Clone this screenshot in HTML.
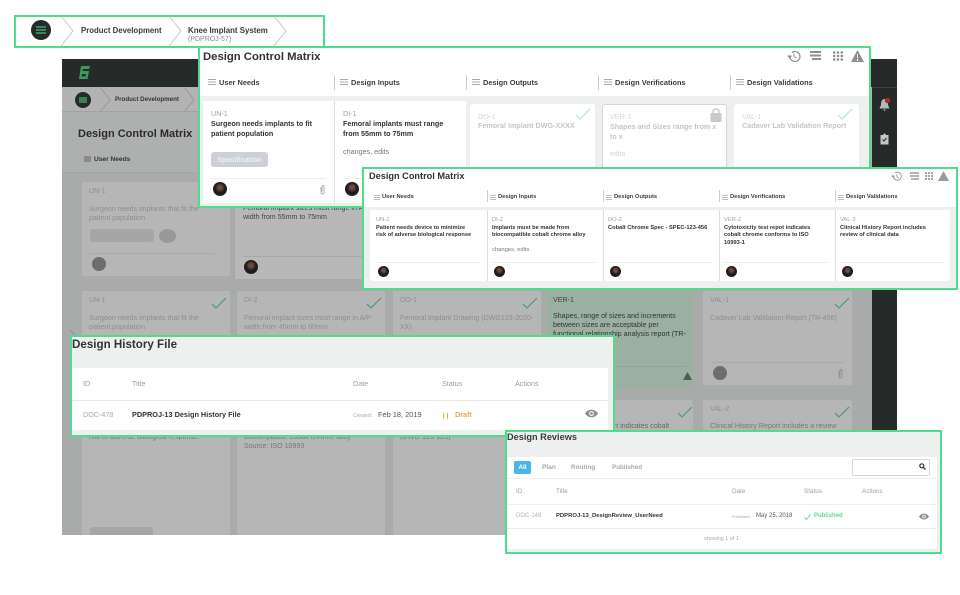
<!DOCTYPE html>
<html><head><meta charset="utf-8">
<style>
*{box-sizing:border-box;margin:0;padding:0}
html,body{width:960px;height:595px;overflow:hidden;background:#fff}
body{position:relative;font-family:"Liberation Sans",sans-serif;color:#333;filter:blur(.3px)}
.a,.t,.c,.p,.av,.s{position:absolute}
.t{white-space:nowrap;line-height:1.2}
.b{font-weight:bold}
.p{border:2px solid #4edc8d;overflow:hidden}
.c{background:#b5b6b5;border-radius:2px}
.bt{color:#8d8e8d;font-size:7.1px;line-height:9.100px;position:absolute;left:7px;white-space:normal}
.av{border-radius:50%;background:radial-gradient(circle at 50% 40%,#6b4a40 0 18%,#1c1a1a 45%,#2a2626 100%)}
.s{background:#ccc}
svg{position:absolute;overflow:visible}
</style></head><body>

<!-- Background app -->
<div class="a" style="left:62px;top:59px;width:835px;height:476px;background:#aeb0af;overflow:hidden">
  <div class="a" style="left:0;top:0;width:835px;height:28px;background:#262a29"></div>
  <svg style="left:16px;top:6px" width="13" height="15"><path d="M3 1H12L11 4H5L4.500 6H11L9.500 14H1L3 1ZM4 9L3.500 11.500H7.500L8 9Z" fill="#3f9a5e" fill-rule="evenodd"/></svg>
  <div class="a" style="left:0;top:28px;width:810px;height:25px;background:#b3b3b3;border-bottom:1px solid #a2a2a2"></div>
  <div class="a" style="left:13px;top:33px;width:16px;height:16px;border-radius:50%;background:#262a29"></div>
  <div class="a" style="left:17px;top:38px;width:8px;height:6px;background:#3d7f57"></div>
  <svg style="left:38px;top:28px" width="20" height="25"><path d="M0 0L10 13L0 25" fill="none" stroke="#999"/></svg>
  <div class="t b" style="left:53px;top:37px;font-size:6.200px;color:#333">Product Development</div>
  <svg style="left:122px;top:28px" width="14" height="25"><path d="M0 0L10 13L0 25" fill="none" stroke="#999"/></svg>
  <div class="t b" style="left:16px;top:69px;font-size:11px;color:#2b2b2b">Design Control Matrix</div>
  <div class="a" style="left:22px;top:97px;width:7px;height:6px;background:#8a8a8a"></div>
  <div class="t b" style="left:32px;top:97px;font-size:6.600px;color:#333">User Needs</div>
  <div class="a" style="left:0;top:113px;width:810px;height:1px;background:#a5a5a5"></div>
  <div class="a" style="left:0;top:114px;width:810px;height:362px;background:#a9abaa"></div>
  <svg style="left:8px;top:271px" width="6" height="6"><path d="M0 0L6 6" stroke="#8f8f8f"/></svg>

  <!-- row 1 -->
  <div class="c" style="left:20px;top:123px;width:148px;height:94px">
    <div class="bt" style="top:5px">UN-1</div>
    <div class="bt" style="top:23px;width:130px">Surgeon needs implants that fit the patient population</div>
    <div class="a" style="left:8px;top:47px;width:64px;height:13px;background:#a5a6a6;border-radius:3px"></div>
    <div class="a" style="left:77px;top:47px;width:17px;height:14px;background:#999;border-radius:50%"></div>
    <div class="a" style="left:8px;top:71px;width:124px;height:1px;background:#a8a9a8"></div>
    <div class="a" style="left:10px;top:75px;width:14px;height:14px;background:#6f6d6b;border-radius:50%"></div>
  </div>
  <div class="c" style="left:173px;top:123px;width:160px;height:97px;background:#b8b8b8">
    <div class="bt" style="top:22px;left:8px;color:#444;white-space:nowrap">Femoral implant sizes must range in A/P<br>width from 55mm to 75mm</div>
    <div class="a" style="left:8px;top:74px;width:150px;height:1px;background:#a8a9a8"></div>
    <div class="av" style="left:9px;top:78px;width:14px;height:14px"></div>
  </div>

  <!-- row 2 -->
  <div class="c" style="left:20px;top:232px;width:148px;height:94px">
    <div class="bt" style="top:5px">UN-1</div>
    <div class="bt" style="top:23px;width:130px">Surgeon needs implants that fit the patient population</div>
    <svg style="left:129px;top:6px" width="16" height="12"><path d="M1 7L5 11L15 1" fill="none" stroke="#5b9c76" stroke-width="1.300"/></svg>
  </div>
  <div class="c" style="left:175px;top:232px;width:148px;height:94px">
    <div class="bt" style="top:5px">DI-2</div>
    <div class="bt" style="top:23px;width:140px">Femoral implant sizes must range in A/P width from 45mm to 60mm</div>
    <svg style="left:129px;top:6px" width="16" height="12"><path d="M1 7L5 11L15 1" fill="none" stroke="#5b9c76" stroke-width="1.300"/></svg>
  </div>
  <div class="c" style="left:331px;top:232px;width:148px;height:94px">
    <div class="bt" style="top:5px">DO-1</div>
    <div class="bt" style="top:23px;width:140px;white-space:nowrap">Femoral Implant Drawing (DWG123-2020-<br>XX)</div>
    <svg style="left:129px;top:6px" width="16" height="12"><path d="M1 7L5 11L15 1" fill="none" stroke="#5b9c76" stroke-width="1.300"/></svg>
  </div>
  <div class="c" style="left:484px;top:232px;width:147px;height:97px;background:#9bb0a1">
    <div class="bt" style="top:5px;color:#444">VER-1</div>
    <div class="bt" style="top:21px;width:138px;color:#333;white-space:nowrap">Shapes, range of sizes and increments<br>between sizes are acceptable per<br>functional relationship analysis report (TR-<br>123)</div>
    <div class="a" style="left:7px;top:75px;width:133px;height:1px;background:#8fa596"></div>
    <svg style="left:137px;top:81px" width="9" height="8"><path d="M4.500 0L9 8H0Z" fill="#555a57"/></svg>
  </div>
  <div class="c" style="left:641px;top:232px;width:149px;height:94px">
    <div class="bt" style="top:5px">VAL-1</div>
    <div class="bt" style="top:23px;width:140px">Cadaver Lab Validation Report (TR-456)</div>
    <svg style="left:131px;top:6px" width="16" height="12"><path d="M1 7L5 11L15 1" fill="none" stroke="#5b9c76" stroke-width="1.300"/></svg>
    <div class="a" style="left:7px;top:71px;width:134px;height:1px;background:#a8a9a8"></div>
    <div class="a" style="left:10px;top:75px;width:14px;height:14px;background:#6f6d6b;border-radius:50%"></div>
    <svg style="left:135px;top:78px" width="5" height="9"><path d="M1 2V7.500A1.500 1.500 0 0 0 4 7.500V1.500A1 1 0 0 0 2 1.500V6.500" fill="none" stroke="#929292"/></svg>
  </div>

  <!-- row 3 -->
  <div class="c" style="left:20px;top:341px;width:148px;height:135px">
    <div class="bt" style="top:33px;width:140px;color:#777">risk of adverse biological response.</div>
    <div class="a" style="left:8px;top:127px;width:63px;height:12px;background:#a5a6a6;border-radius:3px"></div>
  </div>
  <div class="c" style="left:175px;top:341px;width:148px;height:135px">
    <div class="bt" style="top:33px;width:140px;color:#777">biocompatible cobalt chrome alloy<br>Source: ISO 10993</div>
  </div>
  <div class="c" style="left:331px;top:341px;width:148px;height:135px">
    <div class="bt" style="top:33px;width:140px;color:#777">(DWG-123-123)</div>
  </div>
  <div class="c" style="left:484px;top:341px;width:147px;height:135px">
    <svg style="left:131px;top:6px" width="16" height="12"><path d="M1 7L5 11L15 1" fill="none" stroke="#5b9c76" stroke-width="1.300"/></svg>
    <div class="bt" style="top:22px;width:140px;left:60px;white-space:nowrap;color:#666">port indicates cobalt</div>
  </div>
  <div class="c" style="left:641px;top:341px;width:149px;height:135px">
    <div class="bt" style="top:5px">VAL-2</div>
    <svg style="left:131px;top:6px" width="16" height="12"><path d="M1 7L5 11L15 1" fill="none" stroke="#5b9c76" stroke-width="1.300"/></svg>
    <div class="bt" style="top:22px;width:140px;color:#777">Clinical History Report includes a review</div>
  </div>

  <!-- sidebar -->
  <div class="a" style="left:810px;top:0;width:25px;height:476px;background:#262a29;border-top:1px solid #262a29"></div>
  <div class="a" style="left:810px;top:28px;width:25px;height:1px;background:#3f4443"></div>
  <svg style="left:817px;top:39px" width="12" height="14"><path d="M5.500 1C2.500 1.500 2 4 2 7L0.500 10.500H10.500L9 7C9 4 8.500 1.500 5.500 1ZM4 11.500H7L5.500 13Z" fill="#b6b9b8"/><circle cx="8.500" cy="2.500" r="2.700" fill="#a52a2a"/></svg>
  <svg style="left:817px;top:73px" width="12" height="13"><path d="M1.500 3H4L5.500 1L7 3H9.500V12.500H1.500Z" fill="#c3c6c5"/><path d="M3.500 7.500L5 9L7.500 6" fill="none" stroke="#262a29"/></svg>
</div>

<!-- Panel 1 breadcrumb -->
<div class="p" style="left:14px;top:15px;width:311px;height:33px;background:#fff">
  <div class="a" style="left:15px;top:3px;width:20px;height:20px;border-radius:50%;background:#262a29"></div>
  <svg style="left:20px;top:9px" width="10" height="8"><path d="M0 1H10M0 4H10M0 7H10" stroke="#4edc8d" stroke-width="1"/></svg>
  <svg style="left:45px;top:-1px" width="14" height="32"><path d="M0 0L12 15L0 30" fill="none" stroke="#c9c9c9"/></svg>
  <div class="t b" style="left:65px;top:9px;font-size:7.800px;color:#3a3a3a">Product Development</div>
  <svg style="left:153px;top:-1px" width="14" height="32"><path d="M0 0L12 15L0 30" fill="none" stroke="#c9c9c9"/></svg>
  <div class="t b" style="left:172px;top:9px;font-size:7.900px;color:#3a3a3a">Knee Implant System</div>
  <div class="t" style="left:172px;top:19px;font-size:7px;color:#8b8b8b">(PDPROJ-57)</div>
  <svg style="left:258px;top:-1px" width="14" height="32"><path d="M0 0L12 15L0 30" fill="none" stroke="#c9c9c9"/></svg>
</div>

<!-- Panel 2 -->
<div class="p" style="left:198px;top:46px;width:673px;height:162px;background:#fff">
  <div class="t b" style="left:3px;top:3px;font-size:11.300px;color:#333">Design Control Matrix</div>
  <svg style="left:587px;top:2px" width="13" height="12"><path d="M3 7A5 5 0 1 0 5 2.500" fill="none" stroke="#8f8f8f" stroke-width="1.200"/><path d="M0 5.500H5L3 9Z" fill="#8f8f8f"/><path d="M7 3.500V6.500L9.500 8" fill="none" stroke="#8f8f8f"/></svg>
  <svg style="left:610px;top:3px" width="11" height="10"><path d="M0 1H11M0 4.500H11M2 8H11" stroke="#8f8f8f" stroke-width="2"/></svg>
  <svg style="left:633px;top:3px" width="10" height="10"><path d="M0 1.500H10M0 5H10M0 8.500H10" stroke="#8f8f8f" stroke-width="2.200" stroke-dasharray="2.400 1.400"/></svg>
  <svg style="left:651px;top:2px" width="13" height="12"><path d="M6.500 0L13 12H0Z" fill="#8f8f8f"/><path d="M6.500 4V8M6.500 9V11" stroke="#fff"/></svg>

  <svg style="left:8px;top:31px" width="8" height="6"><path d="M0 .5H8M0 3H8M0 5.500H8" stroke="#a8a8a8"/></svg>
  <div class="t b" style="left:19px;top:31px;font-size:7.400px;color:#3d3d3d">User Needs</div>
  <div class="s" style="left:134px;top:27px;width:1px;height:15px"></div>
  <svg style="left:140px;top:31px" width="8" height="6"><path d="M0 .5H8M0 3H8M0 5.500H8" stroke="#a8a8a8"/></svg>
  <div class="t b" style="left:151px;top:31px;font-size:7.400px;color:#3d3d3d">Design Inputs</div>
  <div class="s" style="left:266px;top:27px;width:1px;height:15px"></div>
  <svg style="left:272px;top:31px" width="8" height="6"><path d="M0 .5H8M0 3H8M0 5.500H8" stroke="#a8a8a8"/></svg>
  <div class="t b" style="left:283px;top:31px;font-size:7.400px;color:#3d3d3d">Design Outputs</div>
  <div class="s" style="left:398px;top:27px;width:1px;height:15px"></div>
  <svg style="left:404px;top:31px" width="8" height="6"><path d="M0 .5H8M0 3H8M0 5.500H8" stroke="#a8a8a8"/></svg>
  <div class="t b" style="left:415px;top:31px;font-size:7.400px;color:#3d3d3d">Design Verifications</div>
  <div class="s" style="left:530px;top:27px;width:1px;height:15px"></div>
  <svg style="left:536px;top:31px" width="8" height="6"><path d="M0 .5H8M0 3H8M0 5.500H8" stroke="#a8a8a8"/></svg>
  <div class="t b" style="left:547px;top:31px;font-size:7.400px;color:#3d3d3d">Design Validations</div>

  <div class="a" style="left:0;top:48px;width:671px;height:112px;background:#eef0ef"></div>
  <div class="a" style="left:3px;top:53px;width:263px;height:102px;background:#fff;border-radius:2px"></div>
  <div class="a" style="left:134px;top:53px;width:1px;height:102px;background:#ddd"></div>
  <div class="t" style="left:11px;top:62px;font-size:7.200px;color:#a0a0a0">UN-1</div>
  <div class="t b" style="left:11px;top:71px;width:118px;white-space:normal;font-size:7.200px;line-height:9.700px;color:#333">Surgeon needs implants to fit patient population</div>
  <div class="a" style="left:11px;top:104px;width:57px;height:15px;background:#cdd1d5;border-radius:3px;color:#eef0f1;font-size:7.200px;font-weight:bold;line-height:15px;text-align:center">Specification</div>
  <div class="a" style="left:11px;top:130px;width:115px;height:1px;background:#eee"></div>
  <div class="av" style="left:13px;top:134px;width:14px;height:14px"></div>
  <svg style="left:120px;top:137px" width="5" height="9"><path d="M1 2V7.500A1.500 1.500 0 0 0 4 7.500V1.500A1 1 0 0 0 2 1.500V6.500" fill="none" stroke="#b0b0b0"/></svg>

  <div class="t" style="left:143px;top:62px;font-size:7.200px;color:#a0a0a0">DI-1</div>
  <div class="t b" style="left:143px;top:71px;width:118px;white-space:normal;font-size:7.200px;line-height:9.700px;color:#333">Femoral implants must range from 55mm to 75mm</div>
  <div class="t" style="left:143px;top:100px;font-size:7.200px;color:#777">changes, edits</div>
  <div class="a" style="left:143px;top:130px;width:115px;height:1px;background:#eee"></div>
  <div class="av" style="left:145px;top:134px;width:14px;height:14px"></div>

  <div class="a" style="left:270px;top:56px;width:125px;height:99px;background:#fff;border-radius:3px"></div>
  <div class="t" style="left:278px;top:65px;font-size:7.200px;color:#d5d5d5">DO-1</div>
  <div class="t b" style="left:278px;top:74px;font-size:7.200px;color:#c6c6c6">Femoral Implant DWG-XXXX</div>
  <svg style="left:375px;top:60px" width="16" height="12"><path d="M1 7L5 11L15 1" fill="none" stroke="#bdeccf" stroke-width="1.500"/></svg>

  <div class="a" style="left:402px;top:56px;width:125px;height:99px;background:#fff;border-radius:3px;border:1px solid #d8d8d8"></div>
  <div class="t" style="left:410px;top:65px;font-size:7.200px;color:#d5d5d5">VER-1</div>
  <div class="t b" style="left:410px;top:74px;width:112px;white-space:normal;font-size:7.200px;line-height:9.700px;color:#c6c6c6">Shapes and Sizes range from x to x</div>
  <div class="t" style="left:410px;top:102px;font-size:7.200px;color:#d0d0d0">edits</div>
  <svg style="left:510px;top:60px" width="12" height="15"><path d="M3 6V4A3 3 0 0 1 9 4V6" fill="none" stroke="#c9c9c9" stroke-width="1.400"/><rect x="0.500" y="5" width="11" height="9" rx="1" fill="#c9c9c9"/></svg>

  <div class="a" style="left:534px;top:56px;width:125px;height:99px;background:#fff;border-radius:3px"></div>
  <div class="t" style="left:542px;top:65px;font-size:7.200px;color:#d5d5d5">VAL-1</div>
  <div class="t b" style="left:542px;top:74px;font-size:7.200px;color:#c6c6c6">Cadaver Lab Validation Report</div>
  <svg style="left:637px;top:60px" width="16" height="12"><path d="M1 7L5 11L15 1" fill="none" stroke="#bdeccf" stroke-width="1.500"/></svg>
</div>

<!-- Panel 3 -->
<div class="p" style="left:362px;top:167px;width:596px;height:123px;background:#fff">
  <div class="t b" style="left:5px;top:2px;font-size:9.200px;color:#333">Design Control Matrix</div>
  <svg style="left:527px;top:2px" width="11" height="10"><path d="M2.500 6A4 4 0 1 0 4 2" fill="none" stroke="#9a9a9a"/><path d="M0 4.500H4L2.500 7.500Z" fill="#9a9a9a"/><path d="M5.800 3V5.500L8 7" fill="none" stroke="#9a9a9a" stroke-width=".8"/></svg>
  <svg style="left:546px;top:3px" width="9" height="8"><path d="M0 1H9M0 4H9M1 7H9" stroke="#9a9a9a" stroke-width="1.500"/></svg>
  <svg style="left:561px;top:3px" width="8" height="8"><path d="M0 1H8M0 4H8M0 7H8" stroke="#9a9a9a" stroke-width="1.700" stroke-dasharray="2 1"/></svg>
  <svg style="left:574px;top:2px" width="11" height="10"><path d="M5.500 0L11 10H0Z" fill="#9a9a9a"/></svg>

  <svg style="left:10px;top:26px" width="6" height="5"><path d="M0 .5H6M0 2.500H6M0 4.500H6" stroke="#aaa" stroke-width=".8"/></svg>
  <div class="t b" style="left:18px;top:25px;font-size:5.800px;color:#3d3d3d">User Needs</div>
  <div class="s" style="left:123px;top:21px;width:1px;height:12px"></div>
  <svg style="left:126px;top:26px" width="6" height="5"><path d="M0 .5H6M0 2.500H6M0 4.500H6" stroke="#aaa" stroke-width=".8"/></svg>
  <div class="t b" style="left:134px;top:25px;font-size:5.800px;color:#3d3d3d">Design Inputs</div>
  <div class="s" style="left:239px;top:21px;width:1px;height:12px"></div>
  <svg style="left:242px;top:26px" width="6" height="5"><path d="M0 .5H6M0 2.500H6M0 4.500H6" stroke="#aaa" stroke-width=".8"/></svg>
  <div class="t b" style="left:250px;top:25px;font-size:5.800px;color:#3d3d3d">Design Outputs</div>
  <div class="s" style="left:355px;top:21px;width:1px;height:12px"></div>
  <svg style="left:358px;top:26px" width="6" height="5"><path d="M0 .5H6M0 2.500H6M0 4.500H6" stroke="#aaa" stroke-width=".8"/></svg>
  <div class="t b" style="left:366px;top:25px;font-size:5.800px;color:#3d3d3d">Design Verifications</div>
  <div class="s" style="left:471px;top:21px;width:1px;height:12px"></div>
  <svg style="left:474px;top:26px" width="6" height="5"><path d="M0 .5H6M0 2.500H6M0 4.500H6" stroke="#aaa" stroke-width=".8"/></svg>
  <div class="t b" style="left:482px;top:25px;font-size:5.800px;color:#3d3d3d">Design Validations</div>

  <div class="a" style="left:0;top:38px;width:594px;height:83px;background:#eef0ef"></div>
  <div class="a" style="left:6px;top:41px;width:580px;height:71px;background:#fff;border-radius:2px"></div>
  <div class="a" style="left:123px;top:41px;width:1px;height:71px;background:#ddd"></div>
  <div class="a" style="left:239px;top:41px;width:1px;height:71px;background:#ddd"></div>
  <div class="a" style="left:355px;top:41px;width:1px;height:71px;background:#ddd"></div>
  <div class="a" style="left:471px;top:41px;width:1px;height:71px;background:#ddd"></div>

  <div class="t" style="left:12px;top:48px;font-size:5.800px;color:#a0a0a0">UN-2</div>
  <div class="t b" style="left:12px;top:56px;white-space:nowrap;font-size:5.700px;line-height:7.300px;color:#333">Patient needs device to minimize<br>risk of adverse biological response</div>
  <div class="a" style="left:12px;top:93px;width:104px;height:1px;background:#eee"></div>
  <div class="av" style="left:14px;top:97px;width:11px;height:11px"></div>

  <div class="t" style="left:128px;top:48px;font-size:5.800px;color:#a0a0a0">DI-2</div>
  <div class="t b" style="left:128px;top:56px;white-space:nowrap;font-size:5.700px;line-height:7.300px;color:#333">Implants must be made from<br>biocompatible cobalt chrome alloy</div>
  <div class="t" style="left:128px;top:78px;font-size:5.800px;color:#777">changes, edits</div>
  <div class="a" style="left:128px;top:93px;width:104px;height:1px;background:#eee"></div>
  <div class="av" style="left:130px;top:97px;width:11px;height:11px"></div>

  <div class="t" style="left:244px;top:48px;font-size:5.800px;color:#a0a0a0">DO-2</div>
  <div class="t b" style="left:244px;top:56px;font-size:5.700px;line-height:7.300px;color:#333">Cobalt Chrome Spec - SPEC-123-456</div>
  <div class="a" style="left:244px;top:93px;width:104px;height:1px;background:#eee"></div>
  <div class="av" style="left:246px;top:97px;width:11px;height:11px"></div>

  <div class="t" style="left:360px;top:48px;font-size:5.800px;color:#a0a0a0">VER-2</div>
  <div class="t b" style="left:360px;top:56px;white-space:nowrap;font-size:5.700px;line-height:7.300px;color:#333">Cytotoxicity test repot indicates<br>cobalt chrome conforms to ISO<br>10993-1</div>
  <div class="a" style="left:360px;top:93px;width:104px;height:1px;background:#eee"></div>
  <div class="av" style="left:362px;top:97px;width:11px;height:11px"></div>

  <div class="t" style="left:476px;top:48px;font-size:5.800px;color:#a0a0a0">VAL-2</div>
  <div class="t b" style="left:476px;top:56px;white-space:nowrap;font-size:5.700px;line-height:7.300px;color:#333">Clinical History Report includes<br>review of clinical data</div>
  <div class="a" style="left:476px;top:93px;width:104px;height:1px;background:#eee"></div>
  <div class="av" style="left:478px;top:97px;width:11px;height:11px"></div>
</div>

<!-- Panel 4 -->
<div class="p" style="left:70px;top:335px;width:545px;height:102px;background:#eef0ef">
  <div class="t b" style="left:0;top:1px;font-size:11.600px;color:#333">Design History File</div>
  <div class="a" style="left:0;top:31px;width:536px;height:62px;background:#fff;border-radius:2px"></div>
  <div class="a" style="left:0;top:63px;width:536px;height:1px;background:#e6e6e6"></div>
  <div class="t" style="left:11px;top:43px;font-size:7.200px;color:#9c9c9c">ID</div>
  <div class="t" style="left:60px;top:43px;font-size:7.200px;color:#9c9c9c">Title</div>
  <div class="t" style="left:281px;top:43px;font-size:7.200px;color:#9c9c9c">Date</div>
  <div class="t" style="left:370px;top:43px;font-size:7.200px;color:#9c9c9c">Status</div>
  <div class="t" style="left:443px;top:43px;font-size:7.200px;color:#9c9c9c">Actions</div>
  <div class="t" style="left:11px;top:74px;font-size:7.200px;color:#a8a8a8">DOC-478</div>
  <div class="t b" style="left:60px;top:74px;font-size:7.300px;color:#333">PDPROJ-13 Design History File</div>
  <div class="t" style="left:281px;top:76px;font-size:5px;color:#aaa">Created:</div>
  <div class="t" style="left:306px;top:74px;font-size:7.400px;color:#555">Feb 18, 2019</div>
  <div class="a" style="left:371px;top:76px;width:1px;height:6px;background:#f5a34c"></div>
  <div class="a" style="left:375px;top:76px;width:1px;height:6px;background:#f5a34c"></div>
  <div class="t b" style="left:383px;top:74px;font-size:7.200px;color:#f5a34c">Draft</div>
  <svg style="left:513px;top:72px" width="13" height="9"><path d="M0 4.500C3 -.5 10 -.5 13 4.500C10 9.500 3 9.500 0 4.500Z" fill="#8e8e8e"/><circle cx="6.500" cy="4.500" r="2.400" fill="#fff"/><circle cx="6.500" cy="4.500" r="1.400" fill="#8e8e8e"/></svg>
</div>

<!-- Panel 5 -->
<div class="p" style="left:505px;top:430px;width:437px;height:124px;background:#eef0ef">
  <div class="t b" style="left:0;top:0;font-size:9.200px;color:#3a3a3a">Design Reviews</div>
  <div class="a" style="left:0;top:25px;width:430px;height:92px;background:#fff;border-radius:2px"></div>
  <div class="a" style="left:7px;top:29px;width:17px;height:13px;background:#4cb5e8;border-radius:2px;color:#fff;font-size:6.300px;font-weight:bold;line-height:13px;text-align:center">All</div>
  <div class="t" style="left:35px;top:32px;font-size:6.600px;font-weight:bold;color:#a9a9a9">Plan</div>
  <div class="t" style="left:64px;top:32px;font-size:6.400px;font-weight:bold;color:#a9a9a9">Routing</div>
  <div class="t" style="left:105px;top:32px;font-size:6.300px;font-weight:bold;color:#a9a9a9">Published</div>
  <div class="a" style="left:345px;top:27px;width:78px;height:17px;background:#fff;border:1px solid #d8d8d8;border-radius:2px"></div>
  <svg style="left:412px;top:31px" width="7" height="7"><circle cx="2.800" cy="2.800" r="2" fill="none" stroke="#333" stroke-width="1.200"/><path d="M4.300 4.300L6.500 6.500" stroke="#333" stroke-width="1.300"/></svg>
  <div class="a" style="left:0;top:46px;width:430px;height:1px;background:#f0f0f0"></div>
  <div class="a" style="left:0;top:72px;width:430px;height:1px;background:#f0f0f0"></div>
  <div class="a" style="left:0;top:96px;width:430px;height:1px;background:#ececec"></div>
  <div class="t" style="left:9px;top:56px;font-size:6.300px;color:#a0a0a0">ID</div>
  <div class="t" style="left:49px;top:56px;font-size:6.300px;color:#a0a0a0">Title</div>
  <div class="t" style="left:225px;top:56px;font-size:6.300px;color:#a0a0a0">Date</div>
  <div class="t" style="left:297px;top:56px;font-size:6.300px;color:#a0a0a0">Status</div>
  <div class="t" style="left:355px;top:56px;font-size:6.300px;color:#a0a0a0">Actions</div>
  <div class="t" style="left:9px;top:81px;font-size:6px;color:#b5b5b5">DOC-149</div>
  <div class="t b" style="left:49px;top:81px;font-size:5.900px;color:#333">PDPROJ-13_DesignReview_UserNeed</div>
  <div class="t" style="left:225px;top:83px;font-size:4px;color:#aaa">Published:</div>
  <div class="t" style="left:249px;top:81px;font-size:6px;color:#555">May 25, 2018</div>
  <svg style="left:297px;top:82px" width="7" height="6"><path d="M.5 3.500L2.500 5.500L6.500 .5" fill="none" stroke="#62d68f" stroke-width=".9"/></svg>
  <div class="t b" style="left:307px;top:81px;font-size:6px;color:#62d68f">Published</div>
  <svg style="left:412px;top:81px" width="10" height="7"><path d="M0 3.500C2.500 -.5 7.500 -.5 10 3.500C7.500 7.500 2.500 7.500 0 3.500Z" fill="#909090"/><circle cx="5" cy="3.500" r="1.800" fill="#fff"/><circle cx="5" cy="3.500" r="1" fill="#909090"/></svg>
  <div class="t" style="left:197px;top:104px;font-size:5.400px;color:#aaa">showing 1 of 1</div>
</div>
</body></html>
